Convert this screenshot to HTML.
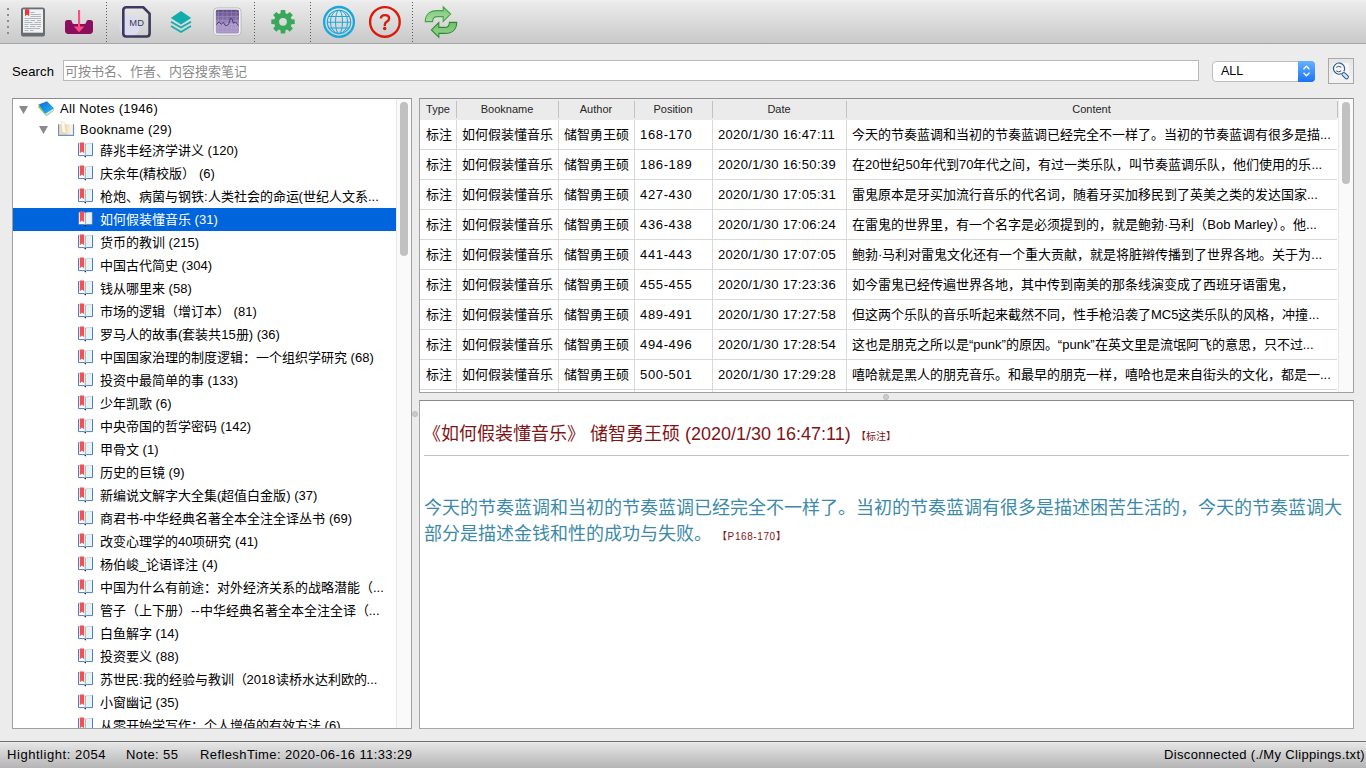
<!DOCTYPE html>
<html lang="zh-CN"><head><meta charset="utf-8">
<style>
*{margin:0;padding:0;box-sizing:border-box}
html,body{width:1366px;height:768px;overflow:hidden;background:#ececec;font-family:"Liberation Sans",sans-serif;color:#000}
.abs{position:absolute}
#toolbar{left:0;top:0;width:1366px;height:44px;background:linear-gradient(#f0f0f0 0,#ebebeb 2px,#c9c9c9 100%);border-bottom:1px solid #a6a6a6}
.sep{position:absolute;top:3px;width:1px;height:38px;background-image:linear-gradient(#6a6a6a 50%,transparent 50%);background-size:1px 4px}
#search-label{left:12px;top:64px;font-size:13px;letter-spacing:.15px}
#search{left:63px;top:60px;width:1136px;height:21px;background:#fff;border:1px solid #b9b9b9;font-size:13px;color:#8a8a8a;padding:2px 0 0 1px;line-height:18px}
#combo{left:1212px;top:61px;width:103px;height:21px;background:#fff;border:1px solid #bdbdbd;border-radius:4px;font-size:12.5px;padding-left:8px;line-height:18px}
#combo .arr{position:absolute;right:-1px;top:-1px;width:17px;height:21px;background:linear-gradient(#67b1ff,#1b73f5);border-radius:0 4px 4px 0}
#sbtn{left:1328px;top:58px;width:26px;height:26px;border:1px solid #a9a9a9;background:#ebebeb}
#tree{left:12px;top:98px;width:400px;height:631px;background:#fff;border:1px solid #a0a0a0;border-top-color:#8e8e8e;overflow:hidden}
.row{position:absolute;left:0;height:23px;width:384px;font-size:13px;line-height:23px;white-space:nowrap}
.row.sel{background:#0064dc;color:#fff}
.row .t{position:absolute;left:87px}
.bk{position:absolute;left:65px;top:3px;width:15px;height:16px}
#tscroll{left:396px;top:99px;width:15px;height:629px;background:#fafafa;border-left:1px solid #e8e8e8}
#tthumb{left:400px;top:102px;width:8px;height:154px;background:#c1c1c1;border-radius:4px}
#xscroll{left:1338px;top:99px;width:15px;height:293px;background:#fafafa;border-left:1px solid #e8e8e8}
#xthumb{left:1342px;top:102px;width:8px;height:82px;background:#c1c1c1;border-radius:4px}
.hdl{position:absolute;width:6px;height:6px;border-radius:3px;background:#cdcdcd;border:1px solid #b9b9b9}
#table{left:419px;top:98px;width:935px;height:295px;background:#fff;border:1px solid #a0a0a0;border-top-color:#8e8e8e;overflow:hidden}
#thead{position:absolute;left:0;top:0;width:917px;height:21px;background:#ebebeb;font-size:11px;color:#262626}
.th{position:absolute;top:0;height:21px;line-height:20px;text-align:center}
.thd{position:absolute;top:2px;width:1px;height:17px;background:#c2c2c2}
.tr{position:absolute;left:0;width:917px;height:30px;border-bottom:1px solid #d9d9d9;font-size:13px;line-height:30px;white-space:nowrap}
.td{position:absolute;top:0;height:30px;overflow:hidden;padding-left:6px}
.vd{position:absolute;top:21px;width:1px;height:274px;background:#d9d9d9}
#detail{left:419px;top:400px;width:935px;height:329px;background:#fff;border:1px solid #a6a6a6;border-top:1px solid #8a8a8a}
#status{left:0;top:741px;width:1366px;height:27px;background:linear-gradient(#ececec 0,#e3e3e3 2px,#b5b5b5 100%);border-top:1px solid #6f6f6f;font-size:13px}
#dtitle{position:absolute;left:3px;top:20px;font-size:18px;color:#7f1416;white-space:nowrap;line-height:26px}
.tag{font-size:10px}
#dhr{position:absolute;left:4px;top:54px;width:925px;height:1px;background:#c2c2c2}
#dcontent{position:absolute;left:4px;top:94px;width:925px;font-size:18px;color:#3b8aa8;line-height:26px}
.tag2{font-size:10px;color:#7f1416;letter-spacing:.6px}
.st{position:absolute;top:5px;line-height:16px;white-space:nowrap;letter-spacing:.4px}
</style></head><body>
<div id="toolbar" class="abs">
<svg class="abs" style="left:0;top:0" width="470" height="44" viewBox="0 0 470 44">
<g fill="#8c8c8c"><rect x="7" y="8" width="2" height="2"/><rect x="7" y="14" width="2" height="2"/><rect x="7" y="20" width="2" height="2"/><rect x="7" y="26" width="2" height="2"/><rect x="7" y="32" width="2" height="2"/></g>
<g fill="#5a5a5a" id="dots"><rect x="106" y="2" width="1" height="1"/><rect x="106" y="5" width="1" height="1"/><rect x="106" y="8" width="1" height="1"/><rect x="106" y="11" width="1" height="1"/><rect x="106" y="14" width="1" height="1"/><rect x="106" y="17" width="1" height="1"/><rect x="106" y="20" width="1" height="1"/><rect x="106" y="23" width="1" height="1"/><rect x="106" y="26" width="1" height="1"/><rect x="106" y="29" width="1" height="1"/><rect x="106" y="32" width="1" height="1"/><rect x="106" y="35" width="1" height="1"/><rect x="106" y="38" width="1" height="1"/><rect x="106" y="41" width="1" height="1"/><rect x="254" y="2" width="1" height="1"/><rect x="254" y="5" width="1" height="1"/><rect x="254" y="8" width="1" height="1"/><rect x="254" y="11" width="1" height="1"/><rect x="254" y="14" width="1" height="1"/><rect x="254" y="17" width="1" height="1"/><rect x="254" y="20" width="1" height="1"/><rect x="254" y="23" width="1" height="1"/><rect x="254" y="26" width="1" height="1"/><rect x="254" y="29" width="1" height="1"/><rect x="254" y="32" width="1" height="1"/><rect x="254" y="35" width="1" height="1"/><rect x="254" y="38" width="1" height="1"/><rect x="254" y="41" width="1" height="1"/><rect x="310" y="2" width="1" height="1"/><rect x="310" y="5" width="1" height="1"/><rect x="310" y="8" width="1" height="1"/><rect x="310" y="11" width="1" height="1"/><rect x="310" y="14" width="1" height="1"/><rect x="310" y="17" width="1" height="1"/><rect x="310" y="20" width="1" height="1"/><rect x="310" y="23" width="1" height="1"/><rect x="310" y="26" width="1" height="1"/><rect x="310" y="29" width="1" height="1"/><rect x="310" y="32" width="1" height="1"/><rect x="310" y="35" width="1" height="1"/><rect x="310" y="38" width="1" height="1"/><rect x="310" y="41" width="1" height="1"/><rect x="412" y="2" width="1" height="1"/><rect x="412" y="5" width="1" height="1"/><rect x="412" y="8" width="1" height="1"/><rect x="412" y="11" width="1" height="1"/><rect x="412" y="14" width="1" height="1"/><rect x="412" y="17" width="1" height="1"/><rect x="412" y="20" width="1" height="1"/><rect x="412" y="23" width="1" height="1"/><rect x="412" y="26" width="1" height="1"/><rect x="412" y="29" width="1" height="1"/><rect x="412" y="32" width="1" height="1"/><rect x="412" y="35" width="1" height="1"/><rect x="412" y="38" width="1" height="1"/><rect x="412" y="41" width="1" height="1"/></g>
<!-- reader -->
<rect x="21" y="7.5" width="24" height="29" rx="2.6" fill="#676d71"/>
<rect x="23" y="9.3" width="20" height="23.4" fill="#eef2f4"/>
<g fill="#b2b6b9">
<rect x="30.5" y="12" width="4" height="1"/><rect x="30.5" y="14" width="10.5" height="1"/><rect x="30.5" y="16" width="10.5" height="1"/>
<rect x="24.5" y="18" width="16.5" height="1"/>
<rect x="24.5" y="20" width="4.5" height="1"/><rect x="30.5" y="20" width="4.5" height="1"/><rect x="37" y="20" width="4" height="1"/>
<rect x="24.5" y="22" width="8" height="1"/><rect x="34.5" y="22" width="6.5" height="1"/>
<rect x="24.5" y="24" width="4" height="1"/><rect x="30" y="24" width="11" height="1"/>
<rect x="24.5" y="26" width="4" height="1"/><rect x="30" y="26" width="5.5" height="1"/><rect x="37" y="26" width="4" height="1"/>
<rect x="24.5" y="28" width="15.5" height="1"/>
<rect x="24.5" y="30" width="4" height="1"/><rect x="30" y="30" width="3.5" height="1"/>
</g>
<path d="M25 9.3 H29.2 V16.3 L27.1 14.6 L25 16.3 Z" fill="#e8353a"/>
<!-- download -->
<path d="M67.5 20 H70 Q72 20 72 22 Q72.2 23.9 74 23.9 H84.2 Q86.2 23.9 86.3 22 Q86.3 20 88.3 20 H90.4 Q93 20 93 22.6 V30.6 Q93 34 89.6 34 H68.4 Q65 34 65 30.6 V22.6 Q65 20 67.5 20 Z" fill="#8a0f5c"/>
<rect x="78" y="10" width="2.1" height="17.5" fill="#ff4a85"/>
<path d="M73.8 26.6 H84.3 L79.05 32.2 Z" fill="#ff4a85"/>
<!-- MD -->
<circle cx="129.5" cy="26.5" r="10.2" fill="#dcdcf0"/>
<path d="M126.3 7.3 H143.2 L149.6 13.6 V33.6 Q149.6 36.5 146.7 36.5 H126.3 Q123.3 36.5 123.3 33.6 V10.3 Q123.3 7.3 126.3 7.3 Z" fill="none" stroke="#3b3a5e" stroke-width="2.6" stroke-linejoin="round"/>
<text x="136.7" y="25.5" font-family="Liberation Sans" font-size="9.4" letter-spacing="0.2" fill="#3b3a5e" text-anchor="middle">MD</text>
<!-- layers -->
<path d="M181 11 L191.2 17.9 L181 24.4 L170.8 17.9 Z" fill="#10adad"/>
<path d="M171 21.8 L181 27.6 L191 21.8" fill="none" stroke="#10adad" stroke-width="1.7"/>
<path d="M171 26.1 L181 31.9 L191 26.1" fill="none" stroke="#10adad" stroke-width="1.7"/>
<!-- activity -->
<defs>
<linearGradient id="pg" x1="0" y1="0" x2="0" y2="1"><stop offset="0" stop-color="#5e4c88"/><stop offset="0.45" stop-color="#8a76b0"/><stop offset="0.6" stop-color="#a898c6"/><stop offset="1" stop-color="#a592c4"/></linearGradient>
<linearGradient id="ga" x1="0" y1="0" x2="0" y2="1"><stop offset="0" stop-color="#7cc57a"/><stop offset="1" stop-color="#a6da9f"/></linearGradient><linearGradient id="gb" x1="0" y1="0" x2="0" y2="1"><stop offset="0" stop-color="#98d394"/><stop offset="1" stop-color="#6fbf6c"/></linearGradient>
</defs>
<rect x="213.6" y="7.9" width="27.4" height="27.4" rx="3.6" fill="#f4f4f4" stroke="#a9a9a9" stroke-width="0.7"/>
<rect x="215.8" y="9.8" width="23.2" height="23.6" rx="1.6" fill="url(#pg)"/>
<g stroke="#c4b6dc" stroke-width="0.55" opacity="0.55">
<path d="M218.4 10 V33.4 M222.9 10 V33.4 M227.1 10 V33.4 M231.6 10 V33.4 M236 10 V33.4"/>
<path d="M216 12.7 H239 M216 16.5 H239 M216 20.4 H239 M216 24.2 H239 M216 27.9 H239 M216 31.2 H239"/>
</g>
<path d="M216.1 24.6 L219.1 22 L221.3 24.2 L223.4 22.3 Q225 26 226.2 25.6 Q228 25.3 228.8 23.7 Q230.5 17 231.3 18.1 Q232.3 19 233.4 23.2 L235.6 22 L238.6 25.6" fill="none" stroke="#43357a" stroke-width="0.95" stroke-linejoin="round"/>
<!-- gear -->
<path d="M280.47 13.27 L280.77 10.11 L285.23 10.11 L285.53 13.27 L287.25 13.98 L289.69 11.96 L292.84 15.11 L290.82 17.55 L291.53 19.27 L294.69 19.57 L294.69 24.03 L291.53 24.33 L290.82 26.05 L292.84 28.49 L289.69 31.64 L287.25 29.62 L285.53 30.33 L285.23 33.49 L280.77 33.49 L280.47 30.33 L278.75 29.62 L276.31 31.64 L273.16 28.49 L275.18 26.05 L274.47 24.33 L271.31 24.03 L271.31 19.57 L274.47 19.27 L275.18 17.55 L273.16 15.11 L276.31 11.96 L278.75 13.98 Z M286.9 21.8 A3.9 3.9 0 1 0 279.1 21.8 A3.9 3.9 0 1 0 286.9 21.8 Z" fill="#38a85a" fill-rule="evenodd"/>
<!-- globe -->
<g fill="none" stroke="#18a7de">
<circle cx="339" cy="21.9" r="14.9" stroke-width="2.3"/>
<circle cx="339" cy="21.9" r="11.7" stroke-width="1.15"/>
<ellipse cx="339" cy="21.9" rx="3.5" ry="11.7" stroke-width="1"/>
<ellipse cx="339" cy="21.9" rx="8.6" ry="11.7" stroke-width="1"/>
<path d="M328.7 16.4 H349.3 M327.3 22.2 H350.7 M328.7 27.9 H349.3" stroke-width="1.05"/>
</g>
<!-- help -->
<circle cx="384.9" cy="21.9" r="14.8" fill="none" stroke="#dc1a0a" stroke-width="2.35"/>
<path d="M380.9 18.5 Q380.9 15.1 385 15.1 Q389.1 15.1 389.1 18.4 Q389.1 20.3 386.7 21.8 Q384.8 23 384.8 25 V25.9" fill="none" stroke="#dc1a0a" stroke-width="2.35" stroke-linecap="butt"/>
<circle cx="384.7" cy="28.4" r="1.75" fill="#dc1a0a"/>
<!-- refresh -->
<g fill="url(#ga)" stroke="#45a345" stroke-width="1.1" stroke-linejoin="miter">
<path d="M425.3 21.6 C425.3 14.5 430 10.6 437 10.6 L443.2 10.6 L443.2 6.8 L450.6 14.1 L443.2 21.5 L443.2 16.6 L437.2 16.6 C434.2 16.6 432.6 18.8 432.6 21.6 Z"/>
<path d="M425.3 21.6 C425.3 14.5 430 10.6 437 10.6 L443.2 10.6 L443.2 6.8 L450.6 14.1 L443.2 21.5 L443.2 16.6 L437.2 16.6 C434.2 16.6 432.6 18.8 432.6 21.6 Z" transform="rotate(180 441 22)" stroke="#2e8a2e" fill="url(#gb)"/>
</g>
</svg>
</div>
<div id="search-label" class="abs">Search</div>
<div id="search" class="abs">可按书名、作者、内容搜索笔记</div>
<div id="combo" class="abs">ALL<div class="arr"><svg width="17" height="20" viewBox="0 0 17 20"><path d="M5.5 8.2 L8.5 5.2 L11.5 8.2 M5.5 11.8 L8.5 14.8 L11.5 11.8" fill="none" stroke="#fff" stroke-width="1.3"/></svg></div></div>
<div id="sbtn" class="abs"><div style="position:absolute;left:0;top:0;width:24px;height:24px;background:linear-gradient(#e6e6e6,#f3f3f3)"></div><div style="position:absolute;left:4px;top:4px;width:16px;height:16px;background:#f6f6f6"></div><svg style="position:absolute;left:0;top:0" width="24" height="24" viewBox="0 0 24 24"><path d="M14.9 12.4 A5.6 5.6 0 1 0 12.6 14.6" fill="none" stroke="#2f5a8c" stroke-width="1.15"/><path d="M7.2 8.3 Q9.7 6.4 12.2 8.3 M7.2 11.9 Q9.7 13.8 12.2 11.9" fill="none" stroke="#2f5a8c" stroke-width="1"/><path d="M13 14.8 L14.2 14.2" stroke="#2f5a8c" stroke-width="1"/><path d="M14.8 15.4 L17.6 18" stroke="#2f5a8c" stroke-width="4.6" stroke-linecap="round"/><path d="M14.8 15.4 L17.6 18" stroke="#cfe9fb" stroke-width="2.6" stroke-linecap="round"/></svg></div>
<div id="tree" class="abs"><div class="row" style="top:0px;height:20px;line-height:20px"><svg style="position:absolute;left:6px;top:7px" width="9" height="8"><path d="M0 0 H9 L4.5 8 Z" fill="#8a8a8a"/></svg><svg style="position:absolute;left:25px;top:2px" width="17" height="17" viewBox="0 0 17 17"><defs><linearGradient id="bg1" x1="0" y1="0" x2="1" y2="1"><stop offset="0" stop-color="#1468d8"/><stop offset="1" stop-color="#22bdf0"/></linearGradient></defs><path d="M0.2 6 L8.3 15.3 L15.6 10 L15.9 7.2 L6.9 13.1 L0.7 3.5 Z" fill="#84c428"/><path d="M6.9 13.1 L15.9 7.2 L15.6 9.6 L8.3 14.6 Z" fill="#d5e2ea"/><path d="M0.7 3.5 L9 0.3 L15.9 7.2 L6.9 13.1 Z" fill="url(#bg1)"/></svg><span class="t" style="left:47px;letter-spacing:.3px">All Notes (1946)</span></div>
<div class="row" style="top:20px;height:21px;line-height:21px"><svg style="position:absolute;left:26px;top:7px" width="9" height="8"><path d="M0 0 H9 L4.5 8 Z" fill="#8a8a8a"/></svg><svg style="position:absolute;left:45px;top:2px" width="17" height="17" viewBox="0 0 17 17"><defs><linearGradient id="bg2" x1="0" y1="0" x2="1" y2="0"><stop offset="0" stop-color="#f6dcb2"/><stop offset="0.45" stop-color="#e9cfa4"/><stop offset="0.55" stop-color="#f3dfbf"/><stop offset="1" stop-color="#fff9ee"/></linearGradient></defs><rect x="1" y="3.2" width="14" height="10.6" fill="url(#bg2)"/><path d="M3.2 0 L6.8 1.4 L8 12.4 L4.2 10.8 Z" fill="#fffaf2" stroke="#e8d6b4" stroke-width="0.6"/><path d="M0.5 3.2 V14.3 H15.5 V3.2" fill="none" stroke="#5f93d0" stroke-width="1.2"/></svg><span class="t" style="left:67px;letter-spacing:.25px">Bookname (29)</span></div>
<div class="row" style="top:40px"><svg class="bk" viewBox="0 0 15 16"><path d="M1 1.5 Q4 1 7.3 2 L7.3 14 L1 13.6 Z" fill="#fdfefe"/><path d="M13.9 1.5 Q10.6 1 7.3 2 L7.3 14 L13.9 13.6 Z" fill="#e6f3f5"/><path d="M1 1.5 Q4 1 7.3 2 Q10.6 1 14 1.5" fill="none" stroke="#c3d0d3" stroke-width="0.8"/><path d="M0.5 1.2 V13.6 H6.3 L7.3 14.4 L8.3 13.6 H14.5 V1.2" fill="none" stroke="#4d7cc2" stroke-width="1"/><path d="M7.3 2 V14" stroke="#9fb0b3" stroke-width="1"/><path d="M1.8 0.4 H6.1 V11.2 L3.95 9.6 L1.8 11.2 Z" fill="#ee5258"/><circle cx="7.3" cy="14.6" r="0.8" fill="#222"/></svg><span class="t">薛兆丰经济学讲义 (120)</span></div>
<div class="row" style="top:63px"><svg class="bk" viewBox="0 0 15 16"><path d="M1 1.5 Q4 1 7.3 2 L7.3 14 L1 13.6 Z" fill="#fdfefe"/><path d="M13.9 1.5 Q10.6 1 7.3 2 L7.3 14 L13.9 13.6 Z" fill="#e6f3f5"/><path d="M1 1.5 Q4 1 7.3 2 Q10.6 1 14 1.5" fill="none" stroke="#c3d0d3" stroke-width="0.8"/><path d="M0.5 1.2 V13.6 H6.3 L7.3 14.4 L8.3 13.6 H14.5 V1.2" fill="none" stroke="#4d7cc2" stroke-width="1"/><path d="M7.3 2 V14" stroke="#9fb0b3" stroke-width="1"/><path d="M1.8 0.4 H6.1 V11.2 L3.95 9.6 L1.8 11.2 Z" fill="#ee5258"/><circle cx="7.3" cy="14.6" r="0.8" fill="#222"/></svg><span class="t">庆余年(精校版） (6)</span></div>
<div class="row" style="top:86px"><svg class="bk" viewBox="0 0 15 16"><path d="M1 1.5 Q4 1 7.3 2 L7.3 14 L1 13.6 Z" fill="#fdfefe"/><path d="M13.9 1.5 Q10.6 1 7.3 2 L7.3 14 L13.9 13.6 Z" fill="#e6f3f5"/><path d="M1 1.5 Q4 1 7.3 2 Q10.6 1 14 1.5" fill="none" stroke="#c3d0d3" stroke-width="0.8"/><path d="M0.5 1.2 V13.6 H6.3 L7.3 14.4 L8.3 13.6 H14.5 V1.2" fill="none" stroke="#4d7cc2" stroke-width="1"/><path d="M7.3 2 V14" stroke="#9fb0b3" stroke-width="1"/><path d="M1.8 0.4 H6.1 V11.2 L3.95 9.6 L1.8 11.2 Z" fill="#ee5258"/><circle cx="7.3" cy="14.6" r="0.8" fill="#222"/></svg><span class="t">枪炮、病菌与钢铁:人类社会的命运(世纪人文系...</span></div>
<div class="row sel" style="top:109px"><svg class="bk" viewBox="0 0 15 16"><path d="M1 1.5 Q4 1 7.3 2 L7.3 14 L1 13.6 Z" fill="#fdfefe"/><path d="M13.9 1.5 Q10.6 1 7.3 2 L7.3 14 L13.9 13.6 Z" fill="#e6f3f5"/><path d="M1 1.5 Q4 1 7.3 2 Q10.6 1 14 1.5" fill="none" stroke="#c3d0d3" stroke-width="0.8"/><path d="M0.5 1.2 V13.6 H6.3 L7.3 14.4 L8.3 13.6 H14.5 V1.2" fill="none" stroke="#4d7cc2" stroke-width="1"/><path d="M7.3 2 V14" stroke="#9fb0b3" stroke-width="1"/><path d="M1.8 0.4 H6.1 V11.2 L3.95 9.6 L1.8 11.2 Z" fill="#ee5258"/><circle cx="7.3" cy="14.6" r="0.8" fill="#222"/></svg><span class="t">如何假装懂音乐 (31)</span></div>
<div class="row" style="top:132px"><svg class="bk" viewBox="0 0 15 16"><path d="M1 1.5 Q4 1 7.3 2 L7.3 14 L1 13.6 Z" fill="#fdfefe"/><path d="M13.9 1.5 Q10.6 1 7.3 2 L7.3 14 L13.9 13.6 Z" fill="#e6f3f5"/><path d="M1 1.5 Q4 1 7.3 2 Q10.6 1 14 1.5" fill="none" stroke="#c3d0d3" stroke-width="0.8"/><path d="M0.5 1.2 V13.6 H6.3 L7.3 14.4 L8.3 13.6 H14.5 V1.2" fill="none" stroke="#4d7cc2" stroke-width="1"/><path d="M7.3 2 V14" stroke="#9fb0b3" stroke-width="1"/><path d="M1.8 0.4 H6.1 V11.2 L3.95 9.6 L1.8 11.2 Z" fill="#ee5258"/><circle cx="7.3" cy="14.6" r="0.8" fill="#222"/></svg><span class="t">货币的教训 (215)</span></div>
<div class="row" style="top:155px"><svg class="bk" viewBox="0 0 15 16"><path d="M1 1.5 Q4 1 7.3 2 L7.3 14 L1 13.6 Z" fill="#fdfefe"/><path d="M13.9 1.5 Q10.6 1 7.3 2 L7.3 14 L13.9 13.6 Z" fill="#e6f3f5"/><path d="M1 1.5 Q4 1 7.3 2 Q10.6 1 14 1.5" fill="none" stroke="#c3d0d3" stroke-width="0.8"/><path d="M0.5 1.2 V13.6 H6.3 L7.3 14.4 L8.3 13.6 H14.5 V1.2" fill="none" stroke="#4d7cc2" stroke-width="1"/><path d="M7.3 2 V14" stroke="#9fb0b3" stroke-width="1"/><path d="M1.8 0.4 H6.1 V11.2 L3.95 9.6 L1.8 11.2 Z" fill="#ee5258"/><circle cx="7.3" cy="14.6" r="0.8" fill="#222"/></svg><span class="t">中国古代简史 (304)</span></div>
<div class="row" style="top:178px"><svg class="bk" viewBox="0 0 15 16"><path d="M1 1.5 Q4 1 7.3 2 L7.3 14 L1 13.6 Z" fill="#fdfefe"/><path d="M13.9 1.5 Q10.6 1 7.3 2 L7.3 14 L13.9 13.6 Z" fill="#e6f3f5"/><path d="M1 1.5 Q4 1 7.3 2 Q10.6 1 14 1.5" fill="none" stroke="#c3d0d3" stroke-width="0.8"/><path d="M0.5 1.2 V13.6 H6.3 L7.3 14.4 L8.3 13.6 H14.5 V1.2" fill="none" stroke="#4d7cc2" stroke-width="1"/><path d="M7.3 2 V14" stroke="#9fb0b3" stroke-width="1"/><path d="M1.8 0.4 H6.1 V11.2 L3.95 9.6 L1.8 11.2 Z" fill="#ee5258"/><circle cx="7.3" cy="14.6" r="0.8" fill="#222"/></svg><span class="t">钱从哪里来 (58)</span></div>
<div class="row" style="top:201px"><svg class="bk" viewBox="0 0 15 16"><path d="M1 1.5 Q4 1 7.3 2 L7.3 14 L1 13.6 Z" fill="#fdfefe"/><path d="M13.9 1.5 Q10.6 1 7.3 2 L7.3 14 L13.9 13.6 Z" fill="#e6f3f5"/><path d="M1 1.5 Q4 1 7.3 2 Q10.6 1 14 1.5" fill="none" stroke="#c3d0d3" stroke-width="0.8"/><path d="M0.5 1.2 V13.6 H6.3 L7.3 14.4 L8.3 13.6 H14.5 V1.2" fill="none" stroke="#4d7cc2" stroke-width="1"/><path d="M7.3 2 V14" stroke="#9fb0b3" stroke-width="1"/><path d="M1.8 0.4 H6.1 V11.2 L3.95 9.6 L1.8 11.2 Z" fill="#ee5258"/><circle cx="7.3" cy="14.6" r="0.8" fill="#222"/></svg><span class="t">市场的逻辑（增订本） (81)</span></div>
<div class="row" style="top:224px"><svg class="bk" viewBox="0 0 15 16"><path d="M1 1.5 Q4 1 7.3 2 L7.3 14 L1 13.6 Z" fill="#fdfefe"/><path d="M13.9 1.5 Q10.6 1 7.3 2 L7.3 14 L13.9 13.6 Z" fill="#e6f3f5"/><path d="M1 1.5 Q4 1 7.3 2 Q10.6 1 14 1.5" fill="none" stroke="#c3d0d3" stroke-width="0.8"/><path d="M0.5 1.2 V13.6 H6.3 L7.3 14.4 L8.3 13.6 H14.5 V1.2" fill="none" stroke="#4d7cc2" stroke-width="1"/><path d="M7.3 2 V14" stroke="#9fb0b3" stroke-width="1"/><path d="M1.8 0.4 H6.1 V11.2 L3.95 9.6 L1.8 11.2 Z" fill="#ee5258"/><circle cx="7.3" cy="14.6" r="0.8" fill="#222"/></svg><span class="t">罗马人的故事(套装共15册) (36)</span></div>
<div class="row" style="top:247px"><svg class="bk" viewBox="0 0 15 16"><path d="M1 1.5 Q4 1 7.3 2 L7.3 14 L1 13.6 Z" fill="#fdfefe"/><path d="M13.9 1.5 Q10.6 1 7.3 2 L7.3 14 L13.9 13.6 Z" fill="#e6f3f5"/><path d="M1 1.5 Q4 1 7.3 2 Q10.6 1 14 1.5" fill="none" stroke="#c3d0d3" stroke-width="0.8"/><path d="M0.5 1.2 V13.6 H6.3 L7.3 14.4 L8.3 13.6 H14.5 V1.2" fill="none" stroke="#4d7cc2" stroke-width="1"/><path d="M7.3 2 V14" stroke="#9fb0b3" stroke-width="1"/><path d="M1.8 0.4 H6.1 V11.2 L3.95 9.6 L1.8 11.2 Z" fill="#ee5258"/><circle cx="7.3" cy="14.6" r="0.8" fill="#222"/></svg><span class="t">中国国家治理的制度逻辑：一个组织学研究 (68)</span></div>
<div class="row" style="top:270px"><svg class="bk" viewBox="0 0 15 16"><path d="M1 1.5 Q4 1 7.3 2 L7.3 14 L1 13.6 Z" fill="#fdfefe"/><path d="M13.9 1.5 Q10.6 1 7.3 2 L7.3 14 L13.9 13.6 Z" fill="#e6f3f5"/><path d="M1 1.5 Q4 1 7.3 2 Q10.6 1 14 1.5" fill="none" stroke="#c3d0d3" stroke-width="0.8"/><path d="M0.5 1.2 V13.6 H6.3 L7.3 14.4 L8.3 13.6 H14.5 V1.2" fill="none" stroke="#4d7cc2" stroke-width="1"/><path d="M7.3 2 V14" stroke="#9fb0b3" stroke-width="1"/><path d="M1.8 0.4 H6.1 V11.2 L3.95 9.6 L1.8 11.2 Z" fill="#ee5258"/><circle cx="7.3" cy="14.6" r="0.8" fill="#222"/></svg><span class="t">投资中最简单的事 (133)</span></div>
<div class="row" style="top:293px"><svg class="bk" viewBox="0 0 15 16"><path d="M1 1.5 Q4 1 7.3 2 L7.3 14 L1 13.6 Z" fill="#fdfefe"/><path d="M13.9 1.5 Q10.6 1 7.3 2 L7.3 14 L13.9 13.6 Z" fill="#e6f3f5"/><path d="M1 1.5 Q4 1 7.3 2 Q10.6 1 14 1.5" fill="none" stroke="#c3d0d3" stroke-width="0.8"/><path d="M0.5 1.2 V13.6 H6.3 L7.3 14.4 L8.3 13.6 H14.5 V1.2" fill="none" stroke="#4d7cc2" stroke-width="1"/><path d="M7.3 2 V14" stroke="#9fb0b3" stroke-width="1"/><path d="M1.8 0.4 H6.1 V11.2 L3.95 9.6 L1.8 11.2 Z" fill="#ee5258"/><circle cx="7.3" cy="14.6" r="0.8" fill="#222"/></svg><span class="t">少年凯歌 (6)</span></div>
<div class="row" style="top:316px"><svg class="bk" viewBox="0 0 15 16"><path d="M1 1.5 Q4 1 7.3 2 L7.3 14 L1 13.6 Z" fill="#fdfefe"/><path d="M13.9 1.5 Q10.6 1 7.3 2 L7.3 14 L13.9 13.6 Z" fill="#e6f3f5"/><path d="M1 1.5 Q4 1 7.3 2 Q10.6 1 14 1.5" fill="none" stroke="#c3d0d3" stroke-width="0.8"/><path d="M0.5 1.2 V13.6 H6.3 L7.3 14.4 L8.3 13.6 H14.5 V1.2" fill="none" stroke="#4d7cc2" stroke-width="1"/><path d="M7.3 2 V14" stroke="#9fb0b3" stroke-width="1"/><path d="M1.8 0.4 H6.1 V11.2 L3.95 9.6 L1.8 11.2 Z" fill="#ee5258"/><circle cx="7.3" cy="14.6" r="0.8" fill="#222"/></svg><span class="t">中央帝国的哲学密码 (142)</span></div>
<div class="row" style="top:339px"><svg class="bk" viewBox="0 0 15 16"><path d="M1 1.5 Q4 1 7.3 2 L7.3 14 L1 13.6 Z" fill="#fdfefe"/><path d="M13.9 1.5 Q10.6 1 7.3 2 L7.3 14 L13.9 13.6 Z" fill="#e6f3f5"/><path d="M1 1.5 Q4 1 7.3 2 Q10.6 1 14 1.5" fill="none" stroke="#c3d0d3" stroke-width="0.8"/><path d="M0.5 1.2 V13.6 H6.3 L7.3 14.4 L8.3 13.6 H14.5 V1.2" fill="none" stroke="#4d7cc2" stroke-width="1"/><path d="M7.3 2 V14" stroke="#9fb0b3" stroke-width="1"/><path d="M1.8 0.4 H6.1 V11.2 L3.95 9.6 L1.8 11.2 Z" fill="#ee5258"/><circle cx="7.3" cy="14.6" r="0.8" fill="#222"/></svg><span class="t">甲骨文 (1)</span></div>
<div class="row" style="top:362px"><svg class="bk" viewBox="0 0 15 16"><path d="M1 1.5 Q4 1 7.3 2 L7.3 14 L1 13.6 Z" fill="#fdfefe"/><path d="M13.9 1.5 Q10.6 1 7.3 2 L7.3 14 L13.9 13.6 Z" fill="#e6f3f5"/><path d="M1 1.5 Q4 1 7.3 2 Q10.6 1 14 1.5" fill="none" stroke="#c3d0d3" stroke-width="0.8"/><path d="M0.5 1.2 V13.6 H6.3 L7.3 14.4 L8.3 13.6 H14.5 V1.2" fill="none" stroke="#4d7cc2" stroke-width="1"/><path d="M7.3 2 V14" stroke="#9fb0b3" stroke-width="1"/><path d="M1.8 0.4 H6.1 V11.2 L3.95 9.6 L1.8 11.2 Z" fill="#ee5258"/><circle cx="7.3" cy="14.6" r="0.8" fill="#222"/></svg><span class="t">历史的巨镜 (9)</span></div>
<div class="row" style="top:385px"><svg class="bk" viewBox="0 0 15 16"><path d="M1 1.5 Q4 1 7.3 2 L7.3 14 L1 13.6 Z" fill="#fdfefe"/><path d="M13.9 1.5 Q10.6 1 7.3 2 L7.3 14 L13.9 13.6 Z" fill="#e6f3f5"/><path d="M1 1.5 Q4 1 7.3 2 Q10.6 1 14 1.5" fill="none" stroke="#c3d0d3" stroke-width="0.8"/><path d="M0.5 1.2 V13.6 H6.3 L7.3 14.4 L8.3 13.6 H14.5 V1.2" fill="none" stroke="#4d7cc2" stroke-width="1"/><path d="M7.3 2 V14" stroke="#9fb0b3" stroke-width="1"/><path d="M1.8 0.4 H6.1 V11.2 L3.95 9.6 L1.8 11.2 Z" fill="#ee5258"/><circle cx="7.3" cy="14.6" r="0.8" fill="#222"/></svg><span class="t">新编说文解字大全集(超值白金版) (37)</span></div>
<div class="row" style="top:408px"><svg class="bk" viewBox="0 0 15 16"><path d="M1 1.5 Q4 1 7.3 2 L7.3 14 L1 13.6 Z" fill="#fdfefe"/><path d="M13.9 1.5 Q10.6 1 7.3 2 L7.3 14 L13.9 13.6 Z" fill="#e6f3f5"/><path d="M1 1.5 Q4 1 7.3 2 Q10.6 1 14 1.5" fill="none" stroke="#c3d0d3" stroke-width="0.8"/><path d="M0.5 1.2 V13.6 H6.3 L7.3 14.4 L8.3 13.6 H14.5 V1.2" fill="none" stroke="#4d7cc2" stroke-width="1"/><path d="M7.3 2 V14" stroke="#9fb0b3" stroke-width="1"/><path d="M1.8 0.4 H6.1 V11.2 L3.95 9.6 L1.8 11.2 Z" fill="#ee5258"/><circle cx="7.3" cy="14.6" r="0.8" fill="#222"/></svg><span class="t">商君书-中华经典名著全本全注全译丛书 (69)</span></div>
<div class="row" style="top:431px"><svg class="bk" viewBox="0 0 15 16"><path d="M1 1.5 Q4 1 7.3 2 L7.3 14 L1 13.6 Z" fill="#fdfefe"/><path d="M13.9 1.5 Q10.6 1 7.3 2 L7.3 14 L13.9 13.6 Z" fill="#e6f3f5"/><path d="M1 1.5 Q4 1 7.3 2 Q10.6 1 14 1.5" fill="none" stroke="#c3d0d3" stroke-width="0.8"/><path d="M0.5 1.2 V13.6 H6.3 L7.3 14.4 L8.3 13.6 H14.5 V1.2" fill="none" stroke="#4d7cc2" stroke-width="1"/><path d="M7.3 2 V14" stroke="#9fb0b3" stroke-width="1"/><path d="M1.8 0.4 H6.1 V11.2 L3.95 9.6 L1.8 11.2 Z" fill="#ee5258"/><circle cx="7.3" cy="14.6" r="0.8" fill="#222"/></svg><span class="t">改变心理学的40项研究 (41)</span></div>
<div class="row" style="top:454px"><svg class="bk" viewBox="0 0 15 16"><path d="M1 1.5 Q4 1 7.3 2 L7.3 14 L1 13.6 Z" fill="#fdfefe"/><path d="M13.9 1.5 Q10.6 1 7.3 2 L7.3 14 L13.9 13.6 Z" fill="#e6f3f5"/><path d="M1 1.5 Q4 1 7.3 2 Q10.6 1 14 1.5" fill="none" stroke="#c3d0d3" stroke-width="0.8"/><path d="M0.5 1.2 V13.6 H6.3 L7.3 14.4 L8.3 13.6 H14.5 V1.2" fill="none" stroke="#4d7cc2" stroke-width="1"/><path d="M7.3 2 V14" stroke="#9fb0b3" stroke-width="1"/><path d="M1.8 0.4 H6.1 V11.2 L3.95 9.6 L1.8 11.2 Z" fill="#ee5258"/><circle cx="7.3" cy="14.6" r="0.8" fill="#222"/></svg><span class="t">杨伯峻_论语译注 (4)</span></div>
<div class="row" style="top:477px"><svg class="bk" viewBox="0 0 15 16"><path d="M1 1.5 Q4 1 7.3 2 L7.3 14 L1 13.6 Z" fill="#fdfefe"/><path d="M13.9 1.5 Q10.6 1 7.3 2 L7.3 14 L13.9 13.6 Z" fill="#e6f3f5"/><path d="M1 1.5 Q4 1 7.3 2 Q10.6 1 14 1.5" fill="none" stroke="#c3d0d3" stroke-width="0.8"/><path d="M0.5 1.2 V13.6 H6.3 L7.3 14.4 L8.3 13.6 H14.5 V1.2" fill="none" stroke="#4d7cc2" stroke-width="1"/><path d="M7.3 2 V14" stroke="#9fb0b3" stroke-width="1"/><path d="M1.8 0.4 H6.1 V11.2 L3.95 9.6 L1.8 11.2 Z" fill="#ee5258"/><circle cx="7.3" cy="14.6" r="0.8" fill="#222"/></svg><span class="t">中国为什么有前途：对外经济关系的战略潜能（...</span></div>
<div class="row" style="top:500px"><svg class="bk" viewBox="0 0 15 16"><path d="M1 1.5 Q4 1 7.3 2 L7.3 14 L1 13.6 Z" fill="#fdfefe"/><path d="M13.9 1.5 Q10.6 1 7.3 2 L7.3 14 L13.9 13.6 Z" fill="#e6f3f5"/><path d="M1 1.5 Q4 1 7.3 2 Q10.6 1 14 1.5" fill="none" stroke="#c3d0d3" stroke-width="0.8"/><path d="M0.5 1.2 V13.6 H6.3 L7.3 14.4 L8.3 13.6 H14.5 V1.2" fill="none" stroke="#4d7cc2" stroke-width="1"/><path d="M7.3 2 V14" stroke="#9fb0b3" stroke-width="1"/><path d="M1.8 0.4 H6.1 V11.2 L3.95 9.6 L1.8 11.2 Z" fill="#ee5258"/><circle cx="7.3" cy="14.6" r="0.8" fill="#222"/></svg><span class="t">管子（上下册）--中华经典名著全本全注全译（...</span></div>
<div class="row" style="top:523px"><svg class="bk" viewBox="0 0 15 16"><path d="M1 1.5 Q4 1 7.3 2 L7.3 14 L1 13.6 Z" fill="#fdfefe"/><path d="M13.9 1.5 Q10.6 1 7.3 2 L7.3 14 L13.9 13.6 Z" fill="#e6f3f5"/><path d="M1 1.5 Q4 1 7.3 2 Q10.6 1 14 1.5" fill="none" stroke="#c3d0d3" stroke-width="0.8"/><path d="M0.5 1.2 V13.6 H6.3 L7.3 14.4 L8.3 13.6 H14.5 V1.2" fill="none" stroke="#4d7cc2" stroke-width="1"/><path d="M7.3 2 V14" stroke="#9fb0b3" stroke-width="1"/><path d="M1.8 0.4 H6.1 V11.2 L3.95 9.6 L1.8 11.2 Z" fill="#ee5258"/><circle cx="7.3" cy="14.6" r="0.8" fill="#222"/></svg><span class="t">白鱼解字 (14)</span></div>
<div class="row" style="top:546px"><svg class="bk" viewBox="0 0 15 16"><path d="M1 1.5 Q4 1 7.3 2 L7.3 14 L1 13.6 Z" fill="#fdfefe"/><path d="M13.9 1.5 Q10.6 1 7.3 2 L7.3 14 L13.9 13.6 Z" fill="#e6f3f5"/><path d="M1 1.5 Q4 1 7.3 2 Q10.6 1 14 1.5" fill="none" stroke="#c3d0d3" stroke-width="0.8"/><path d="M0.5 1.2 V13.6 H6.3 L7.3 14.4 L8.3 13.6 H14.5 V1.2" fill="none" stroke="#4d7cc2" stroke-width="1"/><path d="M7.3 2 V14" stroke="#9fb0b3" stroke-width="1"/><path d="M1.8 0.4 H6.1 V11.2 L3.95 9.6 L1.8 11.2 Z" fill="#ee5258"/><circle cx="7.3" cy="14.6" r="0.8" fill="#222"/></svg><span class="t">投资要义 (88)</span></div>
<div class="row" style="top:569px"><svg class="bk" viewBox="0 0 15 16"><path d="M1 1.5 Q4 1 7.3 2 L7.3 14 L1 13.6 Z" fill="#fdfefe"/><path d="M13.9 1.5 Q10.6 1 7.3 2 L7.3 14 L13.9 13.6 Z" fill="#e6f3f5"/><path d="M1 1.5 Q4 1 7.3 2 Q10.6 1 14 1.5" fill="none" stroke="#c3d0d3" stroke-width="0.8"/><path d="M0.5 1.2 V13.6 H6.3 L7.3 14.4 L8.3 13.6 H14.5 V1.2" fill="none" stroke="#4d7cc2" stroke-width="1"/><path d="M7.3 2 V14" stroke="#9fb0b3" stroke-width="1"/><path d="M1.8 0.4 H6.1 V11.2 L3.95 9.6 L1.8 11.2 Z" fill="#ee5258"/><circle cx="7.3" cy="14.6" r="0.8" fill="#222"/></svg><span class="t">苏世民:我的经验与教训（2018读桥水达利欧的...</span></div>
<div class="row" style="top:592px"><svg class="bk" viewBox="0 0 15 16"><path d="M1 1.5 Q4 1 7.3 2 L7.3 14 L1 13.6 Z" fill="#fdfefe"/><path d="M13.9 1.5 Q10.6 1 7.3 2 L7.3 14 L13.9 13.6 Z" fill="#e6f3f5"/><path d="M1 1.5 Q4 1 7.3 2 Q10.6 1 14 1.5" fill="none" stroke="#c3d0d3" stroke-width="0.8"/><path d="M0.5 1.2 V13.6 H6.3 L7.3 14.4 L8.3 13.6 H14.5 V1.2" fill="none" stroke="#4d7cc2" stroke-width="1"/><path d="M7.3 2 V14" stroke="#9fb0b3" stroke-width="1"/><path d="M1.8 0.4 H6.1 V11.2 L3.95 9.6 L1.8 11.2 Z" fill="#ee5258"/><circle cx="7.3" cy="14.6" r="0.8" fill="#222"/></svg><span class="t">小窗幽记 (35)</span></div>
<div class="row" style="top:615px"><svg class="bk" viewBox="0 0 15 16"><path d="M1 1.5 Q4 1 7.3 2 L7.3 14 L1 13.6 Z" fill="#fdfefe"/><path d="M13.9 1.5 Q10.6 1 7.3 2 L7.3 14 L13.9 13.6 Z" fill="#e6f3f5"/><path d="M1 1.5 Q4 1 7.3 2 Q10.6 1 14 1.5" fill="none" stroke="#c3d0d3" stroke-width="0.8"/><path d="M0.5 1.2 V13.6 H6.3 L7.3 14.4 L8.3 13.6 H14.5 V1.2" fill="none" stroke="#4d7cc2" stroke-width="1"/><path d="M7.3 2 V14" stroke="#9fb0b3" stroke-width="1"/><path d="M1.8 0.4 H6.1 V11.2 L3.95 9.6 L1.8 11.2 Z" fill="#ee5258"/><circle cx="7.3" cy="14.6" r="0.8" fill="#222"/></svg><span class="t">从零开始学写作：个人增值的有效方法 (6)</span></div></div>
<div id="tscroll" class="abs"></div>
<div id="tthumb" class="abs"></div>
<div id="table" class="abs"><div id="thead">
<div class="th" style="left:0px;width:36px">Type</div>
<div class="th" style="left:36px;width:102px">Bookname</div>
<div class="thd" style="left:36px"></div>
<div class="th" style="left:138px;width:76px">Author</div>
<div class="thd" style="left:138px"></div>
<div class="th" style="left:214px;width:78px">Position</div>
<div class="thd" style="left:214px"></div>
<div class="th" style="left:292px;width:134px">Date</div>
<div class="thd" style="left:292px"></div>
<div class="th" style="left:426px;width:491px">Content</div>
<div class="thd" style="left:426px"></div>
</div>
<div class="tr" style="top:21px"><div class="td" style="left:0px;width:36px">标注</div><div class="td" style="left:36px;width:102px">如何假装懂音乐</div><div class="td" style="left:138px;width:76px">储智勇王硕</div><div class="td" style="left:214px;width:78px;letter-spacing:.65px">168-170</div><div class="td" style="left:292px;width:134px;letter-spacing:.33px">2020/1/30 16:47:11</div><div class="td" style="left:426px;width:491px">今天的节奏蓝调和当初的节奏蓝调已经完全不一样了。当初的节奏蓝调有很多是描...</div></div>
<div class="tr" style="top:51px"><div class="td" style="left:0px;width:36px">标注</div><div class="td" style="left:36px;width:102px">如何假装懂音乐</div><div class="td" style="left:138px;width:76px">储智勇王硕</div><div class="td" style="left:214px;width:78px;letter-spacing:.65px">186-189</div><div class="td" style="left:292px;width:134px;letter-spacing:.33px">2020/1/30 16:50:39</div><div class="td" style="left:426px;width:491px">在20世纪50年代到70年代之间，有过一类乐队，叫节奏蓝调乐队，他们使用的乐...</div></div>
<div class="tr" style="top:81px"><div class="td" style="left:0px;width:36px">标注</div><div class="td" style="left:36px;width:102px">如何假装懂音乐</div><div class="td" style="left:138px;width:76px">储智勇王硕</div><div class="td" style="left:214px;width:78px;letter-spacing:.65px">427-430</div><div class="td" style="left:292px;width:134px;letter-spacing:.33px">2020/1/30 17:05:31</div><div class="td" style="left:426px;width:491px">雷鬼原本是牙买加流行音乐的代名词，随着牙买加移民到了英美之类的发达国家...</div></div>
<div class="tr" style="top:111px"><div class="td" style="left:0px;width:36px">标注</div><div class="td" style="left:36px;width:102px">如何假装懂音乐</div><div class="td" style="left:138px;width:76px">储智勇王硕</div><div class="td" style="left:214px;width:78px;letter-spacing:.65px">436-438</div><div class="td" style="left:292px;width:134px;letter-spacing:.33px">2020/1/30 17:06:24</div><div class="td" style="left:426px;width:491px">在雷鬼的世界里，有一个名字是必须提到的，就是鲍勃·马利（Bob Marley）。他...</div></div>
<div class="tr" style="top:141px"><div class="td" style="left:0px;width:36px">标注</div><div class="td" style="left:36px;width:102px">如何假装懂音乐</div><div class="td" style="left:138px;width:76px">储智勇王硕</div><div class="td" style="left:214px;width:78px;letter-spacing:.65px">441-443</div><div class="td" style="left:292px;width:134px;letter-spacing:.33px">2020/1/30 17:07:05</div><div class="td" style="left:426px;width:491px">鲍勃·马利对雷鬼文化还有一个重大贡献，就是将脏辫传播到了世界各地。关于为...</div></div>
<div class="tr" style="top:171px"><div class="td" style="left:0px;width:36px">标注</div><div class="td" style="left:36px;width:102px">如何假装懂音乐</div><div class="td" style="left:138px;width:76px">储智勇王硕</div><div class="td" style="left:214px;width:78px;letter-spacing:.65px">455-455</div><div class="td" style="left:292px;width:134px;letter-spacing:.33px">2020/1/30 17:23:36</div><div class="td" style="left:426px;width:491px">如今雷鬼已经传遍世界各地，其中传到南美的那条线演变成了西班牙语雷鬼，</div></div>
<div class="tr" style="top:201px"><div class="td" style="left:0px;width:36px">标注</div><div class="td" style="left:36px;width:102px">如何假装懂音乐</div><div class="td" style="left:138px;width:76px">储智勇王硕</div><div class="td" style="left:214px;width:78px;letter-spacing:.65px">489-491</div><div class="td" style="left:292px;width:134px;letter-spacing:.33px">2020/1/30 17:27:58</div><div class="td" style="left:426px;width:491px">但这两个乐队的音乐听起来截然不同，性手枪沿袭了MC5这类乐队的风格，冲撞...</div></div>
<div class="tr" style="top:231px"><div class="td" style="left:0px;width:36px">标注</div><div class="td" style="left:36px;width:102px">如何假装懂音乐</div><div class="td" style="left:138px;width:76px">储智勇王硕</div><div class="td" style="left:214px;width:78px;letter-spacing:.65px">494-496</div><div class="td" style="left:292px;width:134px;letter-spacing:.33px">2020/1/30 17:28:54</div><div class="td" style="left:426px;width:491px">这也是朋克之所以是“punk”的原因。“punk”在英文里是流氓阿飞的意思，只不过...</div></div>
<div class="tr" style="top:261px"><div class="td" style="left:0px;width:36px">标注</div><div class="td" style="left:36px;width:102px">如何假装懂音乐</div><div class="td" style="left:138px;width:76px">储智勇王硕</div><div class="td" style="left:214px;width:78px;letter-spacing:.65px">500-501</div><div class="td" style="left:292px;width:134px;letter-spacing:.33px">2020/1/30 17:29:28</div><div class="td" style="left:426px;width:491px">嘻哈就是黑人的朋克音乐。和最早的朋克一样，嘻哈也是来自街头的文化，都是一...</div></div><div class="vd" style="left:36px"></div><div class="vd" style="left:138px"></div><div class="vd" style="left:214px"></div><div class="vd" style="left:292px"></div><div class="vd" style="left:426px"></div><div class="thd" style="left:917px"></div></div>
<div id="detail" class="abs">
<div id="dtitle">《如何假装懂音乐》 储智勇王硕 (2020/1/30 16:47:11) <span class="tag">【标注】</span></div>
<div id="dhr"></div>
<div id="dcontent">今天的节奏蓝调和当初的节奏蓝调已经完全不一样了。当初的节奏蓝调有很多是描述困苦生活的，今天的节奏蓝调大部分是描述金钱和性的成功与失败。 <span class="tag2">【P168-170】</span></div>
</div>
<div id="status" class="abs"><span class="st" style="left:7px;letter-spacing:.55px">Hightlight: 2054</span><span class="st" style="left:126px">Note: 55</span><span class="st" style="left:200px">RefleshTime: 2020-06-16 11:33:29</span><span class="st" style="right:1px;letter-spacing:.33px">Disconnected (./My Clippings.txt)</span></div>
<div id="xscroll" class="abs"></div>
<div id="xthumb" class="abs"></div>
<div class="hdl" style="left:412px;top:411px"></div>
<div class="hdl" style="left:883px;top:394px"></div>
</body></html>
